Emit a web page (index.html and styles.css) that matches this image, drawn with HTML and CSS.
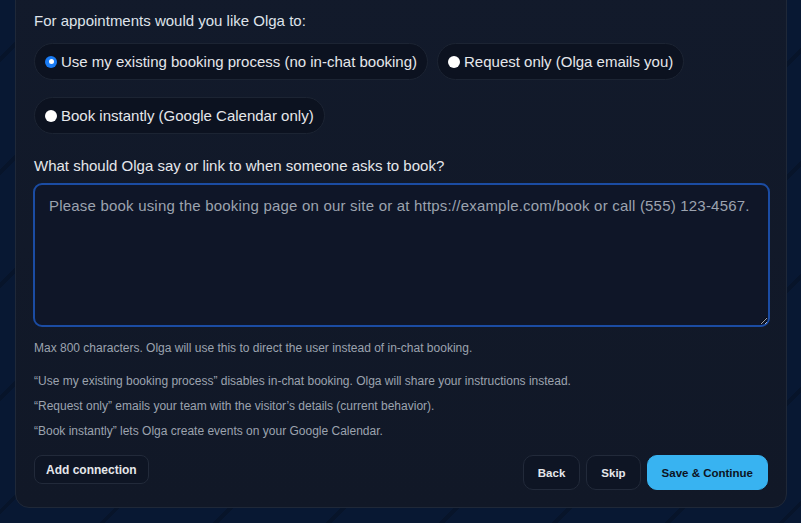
FILE: index.html
```html
<!DOCTYPE html>
<html>
<head>
<meta charset="utf-8">
<link rel="stylesheet" href="styles.css">
</head>
<body>
<div class="page">
  <div class="card">
    <div class="question">For appointments would you like Olga to:</div>
    <div class="options">
      <label class="pill"><span class="radio checked"></span><span>Use my existing booking process (no in-chat booking)</span></label>
      <label class="pill"><span class="radio"></span><span>Request only (Olga emails you)</span></label>
      <label class="pill"><span class="radio"></span><span>Book instantly (Google Calendar only)</span></label>
    </div>
    <div class="label">What should Olga say or link to when someone asks to book?</div>
    <textarea class="field" placeholder="Please book using the booking page on our site or at https://example.com/book or call (555) 123-4567."></textarea>
    <div class="hint">Max 800 characters. Olga will use this to direct the user instead of in-chat booking.</div>
    <div class="notes">
      <div>“Use my existing booking process” disables in-chat booking. Olga will share your instructions instead.</div>
      <div>“Request only” emails your team with the visitor’s details (current behavior).</div>
      <div>“Book instantly” lets Olga create events on your Google Calendar.</div>
    </div>
    <div class="actions">
      <button class="btn small">Add connection</button>
      <div class="right">
        <button class="btn">Back</button>
        <button class="btn">Skip</button>
        <button class="btn primary">Save &amp; Continue</button>
      </div>
    </div>
  </div>
</div>
</body>
</html>
```
FILE: styles.css
```css
* { box-sizing: border-box; }
html, body { margin: 0; height: 100%; }
body {
  font-family: "Liberation Sans", Arial, Helvetica, sans-serif;
  background-color: #081833;
  background-image: repeating-linear-gradient(135deg, rgba(0,0,0,0) 0 40px, rgba(0,0,0,0.18) 40px 44px, rgba(0,0,0,0) 44px 80px);
  overflow: hidden;
}
.page {
  padding: 0 14px 0 15px;
}
.card {
  margin-top: -20px;
  width: 772px;
  background: linear-gradient(180deg, #121a2b 0%, #111827 100%);
  border: 1px solid #1f2838;
  border-radius: 14px;
  padding: 30px 18px 17px 18px;
  color: #e5e7eb;
}
.question {
  font-size: 15px;
  line-height: 20px;
  color: #dfe3ea;
}
.options {
  display: flex;
  flex-wrap: wrap;
  gap: 17px 9px;
  margin-top: 12px;
}
.pill {
  display: flex;
  align-items: center;
  gap: 4px;
  height: 37px;
  padding: 0 10px 0 10px;
  background: #0c1220;
  border: 1px solid #1c2433;
  border-radius: 19px;
  font-size: 15px;
  color: #e5e7eb;
}
.radio {
  width: 12px;
  height: 12px;
  border-radius: 50%;
  background: #ffffff;
  flex: none;
}
.radio.checked {
  background: #1a7cf5;
  position: relative;
}
.radio.checked::after {
  content: "";
  position: absolute;
  left: 3.5px;
  top: 3.5px;
  width: 5px;
  height: 5px;
  border-radius: 50%;
  background: #ffffff;
}
.label {
  margin-top: 22px;
  font-size: 15px;
  line-height: 20px;
  color: #e5e7eb;
}
.field {
  display: block;
  margin: 7px 0 0 -1px;
  width: 737px;
  height: 144px;
  background: #0f1628;
  border: 2px solid #1b4ca3;
  border-radius: 9px;
  padding: 11px 14px;
  font-family: "Liberation Sans", Arial, Helvetica, sans-serif;
  font-size: 15px;
  letter-spacing: 0.2px;
  line-height: 20px;
  color: #e5e7eb;
  outline: none;
  resize: vertical;
}
.field::placeholder { color: #9ca3af; }
.hint {
  margin-top: 13px;
  font-size: 12px;
  line-height: 16px;
  color: #9ca3af;
}
.notes {
  margin-top: 13px;
  font-size: 12px;
  line-height: 25px;
  color: #9ca3af;
}
.actions {
  display: flex;
  justify-content: space-between;
  align-items: flex-start;
  margin-top: 11px;
}
.right {
  display: flex;
  gap: 6px;
}
.btn {
  font-family: "Liberation Sans", Arial, Helvetica, sans-serif;
  font-weight: bold;
  font-size: 11.5px;
  height: 35px;
  padding: 0 14px;
  color: #e5e7eb;
  background: #0e1524;
  border: 1px solid #222a3a;
  border-radius: 10px;
}
.btn.small {
  height: 29px;
  padding: 0 11px;
  font-size: 12px;
  border-radius: 8px;
}
.btn.primary {
  background: #38b3f1;
  border-color: #38b3f1;
  color: #0c1424;
}
```
